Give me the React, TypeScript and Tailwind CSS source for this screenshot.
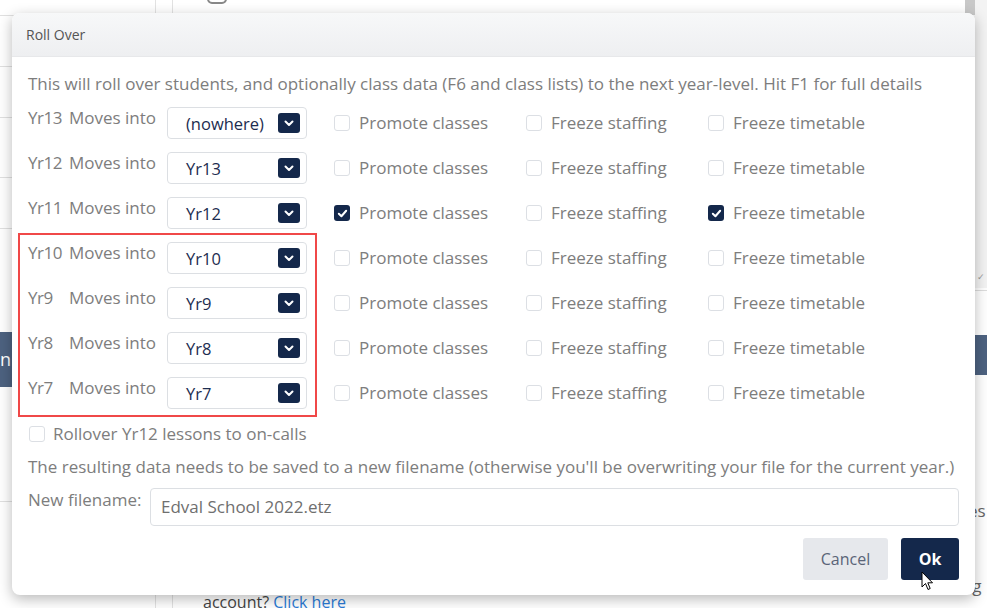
import React from "react";

const rows = [
  { yr: "Yr13", into: "(nowhere)", promote: false, timetable: false },
  { yr: "Yr12", into: "Yr13", promote: false, timetable: false },
  { yr: "Yr11", into: "Yr12", promote: true, timetable: true },
  { yr: "Yr10", into: "Yr10", promote: false, timetable: false },
  { yr: "Yr9", into: "Yr9", promote: false, timetable: false },
  { yr: "Yr8", into: "Yr8", promote: false, timetable: false },
  { yr: "Yr7", into: "Yr7", promote: false, timetable: false },
];

function Check({ checked }: { checked: boolean }) {
  if (checked) {
    return (
      <span className="flex h-[16px] w-[16px] shrink-0 items-center justify-center rounded-[3px] bg-[#14284b]">
        <svg width="11" height="11" viewBox="0 0 12 12">
          <path d="M2 6.3 L4.8 9 L10 3" fill="none" stroke="white" strokeWidth="2.2" strokeLinecap="round" strokeLinejoin="round" />
        </svg>
      </span>
    );
  }
  return <span className="h-[16px] w-[16px] shrink-0 rounded-[3px] border border-[#dcdfe4] bg-white" />;
}

function Chevron() {
  return (
    <span className="flex h-[20px] w-[22px] items-center justify-center rounded-[3px] bg-[#14284b]">
      <svg width="10" height="7" viewBox="0 0 10 7">
        <path d="M1.5 1.5 L5 5 L8.5 1.5" fill="none" stroke="white" strokeWidth="2" strokeLinecap="round" strokeLinejoin="round" />
      </svg>
    </span>
  );
}

export default function App() {
  return (
    <div
      className="relative h-[608px] w-[987px] overflow-hidden bg-white"
      style={{ fontFamily: '"Open Sans", "Noto Sans", sans-serif' }}
    >
      {/* background page */}
      <div className="absolute left-[155px] top-0 h-full w-px bg-[#e2e2e2]" />
      <div className="absolute left-[172px] top-0 h-full w-px bg-[#e2e2e2]" />
      <div className="absolute left-0 top-[15px] h-px w-[40px] bg-[#e0e0e0]" />
      <div className="absolute left-0 top-[66px] h-px w-[40px] bg-[#e0e0e0]" />
      <div className="absolute left-0 top-[117px] h-px w-[40px] bg-[#e0e0e0]" />
      <div className="absolute left-0 top-[177px] h-px w-[40px] bg-[#e0e0e0]" />
      <div className="absolute left-0 top-[228px] h-px w-[40px] bg-[#e0e0e0]" />
      <div className="absolute left-0 top-[501px] h-px w-[40px] bg-[#e0e0e0]" />
      <div className="absolute left-0 top-[332px] flex h-[55px] w-[40px] items-center bg-[#4d6280] text-[18px] text-white">n</div>
      <div className="absolute left-[207px] top-[-6px] h-[10px] w-[20px] rounded-full border-2 border-[#888]" />
      <div className="absolute right-0 top-0 h-[288px] w-[22px] bg-[#f3f3f3]" />
      <div className="absolute left-[965px] top-0 h-[15px] w-[10px] bg-[#c8c8c8]" />
      <div className="absolute left-[977px] top-[270px] text-[9px] text-[#999]">✓</div>
      <div className="absolute left-[960px] top-[290px] h-px w-[27px] bg-[#ddd]" />
      <div className="absolute left-[960px] top-[335px] h-[40px] w-[27px] bg-[#4d6280]" />
      <div className="absolute left-[968px] top-[498px] text-[17px] text-[#666]">es</div>
      <div className="absolute left-[968px] top-[573px] text-[17px] text-[#666]">ig</div>
      <div className="absolute left-[203px] top-[591px] text-[16px] leading-[22px] text-[#444]">
        account? <span className="text-[#2b7bd6]">Click here</span>
      </div>

      {/* modal */}
      <div className="absolute left-[12px] top-[13px] flex h-[582px] w-[963px] flex-col overflow-hidden rounded-[8px] bg-white shadow-[0_4px_14px_rgba(0,0,0,0.28)]">
        <div className="flex h-[44px] shrink-0 items-center border-b border-[#e7e8ea] bg-gradient-to-b from-[#f7f8f9] to-[#eeeff1] pl-[14px] text-[14px] text-[#555]">
          Roll Over
        </div>
        <div className="flex flex-1 flex-col px-[16px] text-[17px] text-[#7d7d7d]">
          <div className="mt-[16px] leading-[22px]">
            This will roll over students, and optionally class data (F6 and class lists) to the next year-level. Hit F1 for full details
          </div>
          <div className="mt-[12px] flex flex-col gap-[13px]">
            {rows.map((r) => (
              <div key={r.yr} className="flex items-start">
                <div className="w-[41px] shrink-0 tracking-[-0.5px] leading-[22px]">{r.yr}</div>
                <div className="w-[98px] shrink-0 leading-[22px]">Moves into</div>
                <div className="flex h-[32px] w-[140px] shrink-0 items-center justify-between rounded-[4px] border border-[#dcdfe3] pl-[18px] pr-[6px] text-[16.5px] text-[#1d2d50]">
                  <span className="pt-[2px]">{r.into}</span>
                  <Chevron />
                </div>
                <div className="ml-[27px] flex h-[32px] w-[192px] items-center gap-[9px]">
                  <Check checked={r.promote} />
                  <span>Promote classes</span>
                </div>
                <div className="flex h-[32px] w-[182px] items-center gap-[9px]">
                  <Check checked={false} />
                  <span>Freeze staffing</span>
                </div>
                <div className="flex h-[32px] items-center gap-[9px]">
                  <Check checked={r.timetable} />
                  <span>Freeze timetable</span>
                </div>
              </div>
            ))}
          </div>
          <div className="mt-[14px] flex items-center gap-[8px] pl-[1px] leading-[22px]">
            <Check checked={false} />
            <span>Rollover Yr12 lessons to on-calls</span>
          </div>
          <div className="mt-[11px] leading-[22px]">
            The resulting data needs to be saved to a new filename (otherwise you'll be overwriting your file for the current year.)
          </div>
          <div className="mt-[10px] flex items-start">
            <div className="w-[122px] shrink-0 pt-[1px] leading-[22px]">New filename:</div>
            <div className="flex h-[38px] flex-1 items-center rounded-[4px] border border-[#dcdfe3] pl-[10px] text-[#6f6f6f]">
              Edval School 2022.etz
            </div>
          </div>
          <div className="mt-[12px] flex justify-end gap-[13px]">
            <button className="h-[42px] w-[85px] rounded-[3px] bg-[#e6e8ec] text-[16px] text-[#5a6478]">Cancel</button>
            <button className="h-[42px] w-[58px] rounded-[3px] bg-[#14284b] text-[16px] font-bold text-white">Ok</button>
          </div>
        </div>
      </div>

      {/* annotation */}
      <div className="absolute left-[18px] top-[233px] h-[184px] w-[299px] border-2 border-[#f04848]" />

      {/* cursor */}
      <svg className="absolute left-[921px] top-[571px]" width="14" height="21" viewBox="0 0 14 21">
        <path d="M1 1 L1 16 L4.5 12.5 L7 18.5 L9.2 17.5 L6.8 11.8 L11.5 11.8 Z" fill="white" stroke="black" strokeWidth="1" strokeLinejoin="round" />
      </svg>
    </div>
  );
}
